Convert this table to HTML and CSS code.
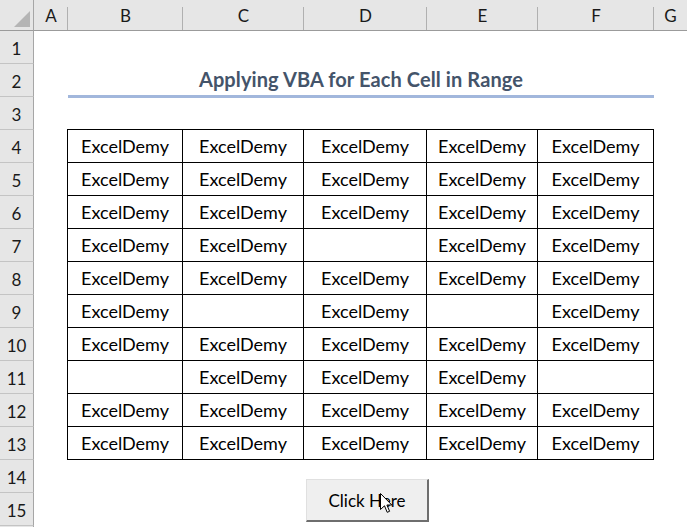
FILE: index.html
```html
<!DOCTYPE html>
<html>
<head>
<meta charset="utf-8">
<link rel="stylesheet" href="styles.css">
</head>
<body>
<div class="sheet">
  <div class="corner"><span class="tri"></span></div>
  <div class="colhdr">A</div>
  <div class="colhdr">B</div>
  <div class="colhdr">C</div>
  <div class="colhdr">D</div>
  <div class="colhdr">E</div>
  <div class="colhdr">F</div>
  <div class="colhdr last">G</div>

  <div class="rowhdr r1">1</div>
  <div class="rowhdr r2">2</div>
  <div class="rowhdr r3">3</div>
  <div class="rowhdr r4">4</div>
  <div class="rowhdr r5">5</div>
  <div class="rowhdr r6">6</div>
  <div class="rowhdr r7">7</div>
  <div class="rowhdr r8">8</div>
  <div class="rowhdr r9">9</div>
  <div class="rowhdr r10">10</div>
  <div class="rowhdr r11">11</div>
  <div class="rowhdr r12">12</div>
  <div class="rowhdr r13">13</div>
  <div class="rowhdr r14">14</div>
  <div class="rowhdr r15">15</div>
  <div class="rowhdr r16"></div>

  <div class="title">Applying VBA for Each Cell in Range</div>

  <div class="data">
    <div class="c">ExcelDemy</div><div class="c">ExcelDemy</div><div class="c">ExcelDemy</div><div class="c">ExcelDemy</div><div class="c">ExcelDemy</div>
    <div class="c">ExcelDemy</div><div class="c">ExcelDemy</div><div class="c">ExcelDemy</div><div class="c">ExcelDemy</div><div class="c">ExcelDemy</div>
    <div class="c">ExcelDemy</div><div class="c">ExcelDemy</div><div class="c">ExcelDemy</div><div class="c">ExcelDemy</div><div class="c">ExcelDemy</div>
    <div class="c">ExcelDemy</div><div class="c">ExcelDemy</div><div class="c"></div><div class="c">ExcelDemy</div><div class="c">ExcelDemy</div>
    <div class="c">ExcelDemy</div><div class="c">ExcelDemy</div><div class="c">ExcelDemy</div><div class="c">ExcelDemy</div><div class="c">ExcelDemy</div>
    <div class="c">ExcelDemy</div><div class="c"></div><div class="c">ExcelDemy</div><div class="c"></div><div class="c">ExcelDemy</div>
    <div class="c">ExcelDemy</div><div class="c">ExcelDemy</div><div class="c">ExcelDemy</div><div class="c">ExcelDemy</div><div class="c">ExcelDemy</div>
    <div class="c"></div><div class="c">ExcelDemy</div><div class="c">ExcelDemy</div><div class="c">ExcelDemy</div><div class="c"></div>
    <div class="c">ExcelDemy</div><div class="c">ExcelDemy</div><div class="c">ExcelDemy</div><div class="c">ExcelDemy</div><div class="c">ExcelDemy</div>
    <div class="c">ExcelDemy</div><div class="c">ExcelDemy</div><div class="c">ExcelDemy</div><div class="c">ExcelDemy</div><div class="c">ExcelDemy</div>
  </div>

  <div class="btnwrap">
    <div class="btn">Click Here</div>
    <svg class="cursor" width="13" height="21" viewBox="0 0 13 21">
      <path d="M0.5 0.5 L0.5 16.5 L4.5 12.8 L7.2 19.3 L9.6 18.3 L6.9 12 L11.8 12 Z" fill="#fff" stroke="#000" stroke-width="1" stroke-linejoin="miter"/>
    </svg>
  </div>
</div>
</body>
</html>
```
FILE: styles.css
```css
* { box-sizing: border-box; }
html, body { margin: 0; padding: 0; background: #fff; }
body { width: 687px; height: 527px; overflow: hidden; font-family: Lato, "Open Sans", sans-serif; color: #000; }

.sheet {
  display: grid;
  grid-template-columns: 34px 34px 115px 121px 123px 111px 116px 1fr;
  grid-template-rows: 31px repeat(15, 33px) 1fr;
  width: 687px;
  height: 527px;
  background: #fff;
}

.corner {
  background: #e6e6e6;
  border-right: 1px solid #a6a6a6;
  border-bottom: 1px solid #9b9b9b;
  position: relative;
}
.tri {
  position: absolute;
  left: 14px;
  top: 11px;
  width: 0;
  height: 0;
  border-left: 16px solid transparent;
  border-bottom: 16px solid #b5b5b5;
}

.colhdr {
  background: #e6e6e6 linear-gradient(#b0b0b0, #b0b0b0) right 7px / 1px calc(100% - 7px) no-repeat;
  border-bottom: 1px solid #9b9b9b;
  display: flex;
  align-items: flex-end;
  justify-content: center;
  padding-bottom: 4px;
  font-size: 17px;
  color: #1a1a1a;
}
.colhdr.last { background: #e6e6e6; }

.rowhdr {
  grid-column: 1;
  background: #e6e6e6;
  border-right: 1px solid #a6a6a6;
  border-bottom: 1px solid #c4c4c4;
  display: flex;
  align-items: flex-end;
  justify-content: center;
  padding-bottom: 4px;
  font-size: 17px;
  color: #1a1a1a;
}
.r16 { border-bottom: none; }

.title {
  grid-row: 3;
  grid-column: 3 / 8;
  margin-bottom: -1px;
  border-bottom: 3px solid #a2b7dc;
  display: flex;
  align-items: flex-end;
  justify-content: center;
  padding-bottom: 4px;
  font-weight: bold;
  font-size: 20px;
  letter-spacing: 0.1px;
  color: #44546a;
}

.data {
  grid-row: 5 / 15;
  grid-column: 3 / 8;
  margin-left: -1px;
  margin-top: -1px;
  display: grid;
  grid-template-columns: 115px 121px 123px 111px 116px;
  grid-template-rows: repeat(10, 33px);
  border-left: 1px solid #000;
  border-top: 1px solid #000;
}
.c {
  border-right: 1px solid #000;
  border-bottom: 1px solid #000;
  display: flex;
  align-items: flex-end;
  justify-content: center;
  padding-bottom: 5px;
  font-size: 18px;
}

.btnwrap {
  grid-row: 15 / 17;
  grid-column: 5;
  position: relative;
}
.btn {
  margin-top: 19px;
  margin-left: 2px;
  width: 123px;
  height: 43px;
  background: #efefef;
  border-top: 1px solid #e0e0e0;
  border-left: 1px solid #e0e0e0;
  border-right: 2px solid #6e6e6e;
  border-bottom: 2px solid #6e6e6e;
  display: flex;
  align-items: center;
  justify-content: center;
  padding-top: 1px;
  font-size: 17px;
  color: #000;
}
.cursor {
  position: absolute;
  left: 76px;
  top: 33px;
}
```
